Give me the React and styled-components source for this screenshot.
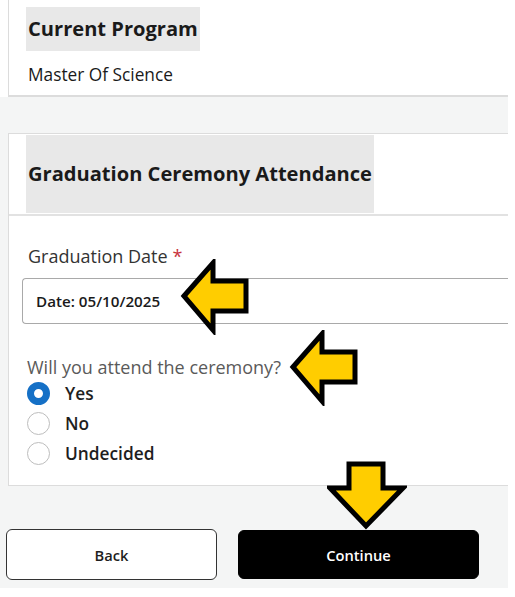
import React from 'react';
import styled, { createGlobalStyle } from 'styled-components';

const GlobalStyle = createGlobalStyle`
  html, body {
    margin: 0;
    padding: 0;
    background: #fff;
  }
  body {
    font-family: "Open Sans", "DejaVu Sans", sans-serif;
    color: #1e1e1e;
  }
`;

const Screen = styled.div`
  position: relative;
  width: 508px;
  height: 588px;
  background: #f4f5f5;
  overflow: hidden;
`;

const TopStrip = styled.div`
  background: #fff;
  padding-left: 8px;
`;

const Card = styled.section`
  background: #fff;
  border-left: 1px solid #dcdcdc;
  border-top: ${(p) => (p.$open ? 'none' : '1px solid #dcdcdc')};
  border-bottom: 2px solid #dcdcdc;
`;

const ProgramCard = styled(Card)`
  padding: 7px 0 0 17px;
  box-sizing: border-box;
  height: 97px;
`;

const HeaderMark = styled.h2`
  display: inline-block;
  margin: 0;
  padding: 0 2px;
  background: #e8e8e8;
  font-size: 20.1px;
  font-weight: 700;
  color: #1a1a1a;
  height: ${(p) => p.$h}px;
  line-height: ${(p) => p.$h}px;
`;

const ProgramName = styled.div`
  margin: 12px 0 0 2px;
  font-size: 17.3px;
  line-height: 24px;
  color: #1a1a1a;
`;

const AttendanceCard = styled(Card)`
  margin: 36px 0 0 8px;
  border-bottom-width: 1px;
`;

const CardHead = styled.div`
  padding: 1px 0 0 17px;
  border-bottom: 2px solid #e2e2e2;
  height: 79px;
`;

const CardBody = styled.div`
  padding: 28px 0 17px 18px;
`;

const FieldLabel = styled.div`
  padding-left: 1px;
  font-size: 18px;
  line-height: 24px;
  color: #333;
`;

const Required = styled.span`
  color: #c8323c;
  margin-left: 5px;
`;

const DateField = styled.div`
  box-sizing: border-box;
  margin: 10px 0 0 -5px;
  height: 46px;
  border: 1px solid #a9a9a9;
  border-right: none;
  border-radius: 4px 0 0 4px;
  display: flex;
  align-items: center;
  padding: 0 0 1px 13px;
  font-size: 15.2px;
  font-weight: 600;
  color: #1a1a1a;
`;

const Question = styled.div`
  margin-top: 31px;
  font-size: 18px;
  line-height: 24px;
  color: #5a5a5a;
`;

const Options = styled.div`
  display: flex;
  flex-direction: column;
  margin-top: -1px;
`;

const Option = styled.label`
  display: flex;
  align-items: center;
  height: 30px;
  gap: 15px;
  font-size: 17.3px;
  font-weight: 600;
  color: #1e1e1e;
`;

const Radio = styled.input.attrs({ type: 'radio' })`
  appearance: none;
  margin: 0;
  width: 23px;
  height: 23px;
  box-sizing: border-box;
  border-radius: 50%;
  border: 1.5px solid #bdbdbd;
  background: #fff;

  &:checked {
    border: 7px solid #1570c6;
  }
`;

const Actions = styled.div`
  display: flex;
  gap: 21px;
  margin-top: 43px;
  padding-left: 6px;
  align-items: flex-start;
`;

const Button = styled.button`
  box-sizing: border-box;
  width: ${(p) => p.$w}px;
  height: ${(p) => p.$h}px;
  border-radius: 6px;
  font-family: inherit;
  font-size: 14.7px;
  font-weight: 600;
  border: 1.5px solid ${(p) => (p.$primary ? '#000' : '#333')};
  background: ${(p) => (p.$primary ? '#000' : '#fff')};
  color: ${(p) => (p.$primary ? '#fff' : '#1e1e1e')};
  margin-top: ${(p) => (p.$primary ? 1 : 0)}px;
`;

const Pointer = styled.svg`
  position: absolute;
  left: ${(p) => p.$x}px;
  top: ${(p) => p.$y}px;
`;

const LeftArrow = ({ x, y }) => (
  <Pointer $x={x} $y={y} width="70" height="76" viewBox="0 0 70 76">
    <polygon
      points="4,37 33,4 33,22 66,22 66,52 33,52 33,71"
      fill="#ffcd00"
      stroke="#000"
      strokeWidth="5"
      strokeLinejoin="miter"
    />
  </Pointer>
);

const DownArrow = ({ x, y }) => (
  <Pointer $x={x} $y={y} width="80" height="70" viewBox="0 0 80 70">
    <polygon
      points="22,3 56,3 56,27 76,27 39,65 3,27 22,27"
      fill="#ffcd00"
      stroke="#000"
      strokeWidth="5"
      strokeLinejoin="miter"
    />
  </Pointer>
);

const choices = ['Yes', 'No', 'Undecided'];

export default function App() {
  return (
    <>
      <GlobalStyle />
      <Screen>
        <TopStrip>
          <ProgramCard $open>
            <HeaderMark $h={44}>Current Program</HeaderMark>
            <ProgramName>Master Of Science</ProgramName>
          </ProgramCard>
        </TopStrip>

        <AttendanceCard>
          <CardHead>
            <HeaderMark $h={78}>Graduation Ceremony Attendance</HeaderMark>
          </CardHead>
          <CardBody>
            <FieldLabel>
              Graduation Date<Required>*</Required>
            </FieldLabel>
            <DateField>Date: 05/10/2025</DateField>
            <Question>Will you attend the ceremony?</Question>
            <Options>
              {choices.map((c, i) => (
                <Option key={c}>
                  <Radio name="attend" defaultChecked={i === 0} />
                  {c}
                </Option>
              ))}
            </Options>
          </CardBody>
        </AttendanceCard>

        <Actions>
          <Button $w={211} $h={51}>Back</Button>
          <Button $primary $w={241} $h={49}>Continue</Button>
        </Actions>

        <LeftArrow x={180} y={259} />
        <LeftArrow x={289} y={330} />
        <DownArrow x={327} y={461} />
      </Screen>
    </>
  );
}
